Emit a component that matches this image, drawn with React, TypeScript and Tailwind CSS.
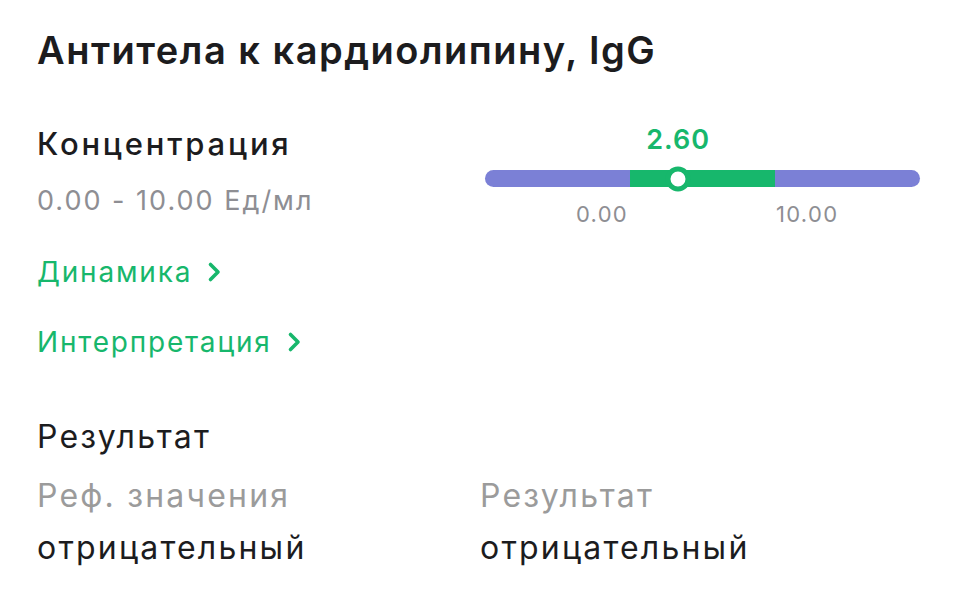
const font = "font-['Inter','Noto_Sans',sans-serif]";

interface RangeBarProps {
  value: number;
  min: number;
  max: number;
  thumbPercent: number;
}

const RangeBar = ({ value, min, max, thumbPercent }: RangeBarProps) => {
  return (
    <div className="w-[435px] pt-[20px]">
      <div className="relative h-[38px]">
        <div
          className="absolute top-1/2 -translate-x-1/2 -translate-y-1/2 text-[27px] font-semibold leading-none tracking-[1px] text-[#17b76c]"
          style={{ left: `${thumbPercent}%` }}
        >
          {value.toFixed(2)}
        </div>
      </div>
      <div className="relative mt-[12px] flex h-[17px]">
        <div className="h-full flex-1 rounded-l-full bg-[#7b80d6]" />
        <div className="h-full w-[145px] bg-[#17b76c]" />
        <div className="h-full flex-1 rounded-r-full bg-[#7b80d6]" />
        <div
          className="absolute top-1/2 h-[25px] w-[25px] -translate-x-1/2 -translate-y-1/2 rounded-full border-[5px] border-[#17b76c] bg-white"
          style={{ left: `${thumbPercent}%` }}
        />
      </div>
      <div className="mt-[14px] flex h-[26px] items-center text-[22px] leading-none tracking-[1.3px] text-[#8e8e93]">
        <span className="w-[145px] pr-[2px] text-right">{min.toFixed(2)}</span>
        <span className="w-[145px]" />
        <span className="pl-[1px]">{max.toFixed(2)}</span>
      </div>
    </div>
  );
};

const Chevron = () => (
  <svg width="15" height="22" viewBox="0 0 15 22" fill="none">
    <polyline
      points="3.5,3.5 11,11 3.5,18.5"
      stroke="currentColor"
      strokeWidth="3.6"
      strokeLinecap="round"
      strokeLinejoin="round"
    />
  </svg>
);

const LinkRow = ({ label }: { label: string }) => (
  <a className="flex h-[70px] items-center gap-[15px] text-[28px] leading-none tracking-[1.8px] text-[#17b76c]">
    <span>{label}</span>
    <Chevron />
  </a>
);

export default function App() {
  return (
    <div className={`h-[600px] w-[955px] bg-white px-[37px] text-[#1c1c1e] ${font}`}>
      <h1 className="flex h-[100px] items-center text-[38px] font-semibold leading-none tracking-[1.5px]">
        Антитела к кардиолипину, IgG
      </h1>

      <div className="-mr-[2px] flex justify-between">
        <div>
          <div className="flex h-[86px] items-center text-[31px] font-medium leading-none tracking-[2.8px]">
            Концентрация
          </div>
          <div className="flex h-[28px] items-center text-[27px] leading-none tracking-[2px] text-[#8e8e93]">
            0.00 - 10.00 Ед/мл
          </div>
        </div>
        <RangeBar value={2.6} min={0} max={10} thumbPercent={44.4} />
      </div>

      <div className="mt-[10px] flex flex-col">
        <LinkRow label="Динамика" />
        <LinkRow label="Интерпретация" />
      </div>

      <div className="mt-[35px] text-[32px] leading-none tracking-[2.2px]">
        <div className="flex h-[50px] items-center">Результат</div>
        <div className="mt-[8px] grid grid-cols-[443px_1fr]">
          <div className="flex h-[52px] items-center text-[#9b9b9b]">Реф. значения</div>
          <div className="flex h-[52px] items-center text-[#9b9b9b]">Результат</div>
          <div className="flex h-[52px] items-center">отрицательный</div>
          <div className="flex h-[52px] items-center">отрицательный</div>
        </div>
      </div>
    </div>
  );
}
